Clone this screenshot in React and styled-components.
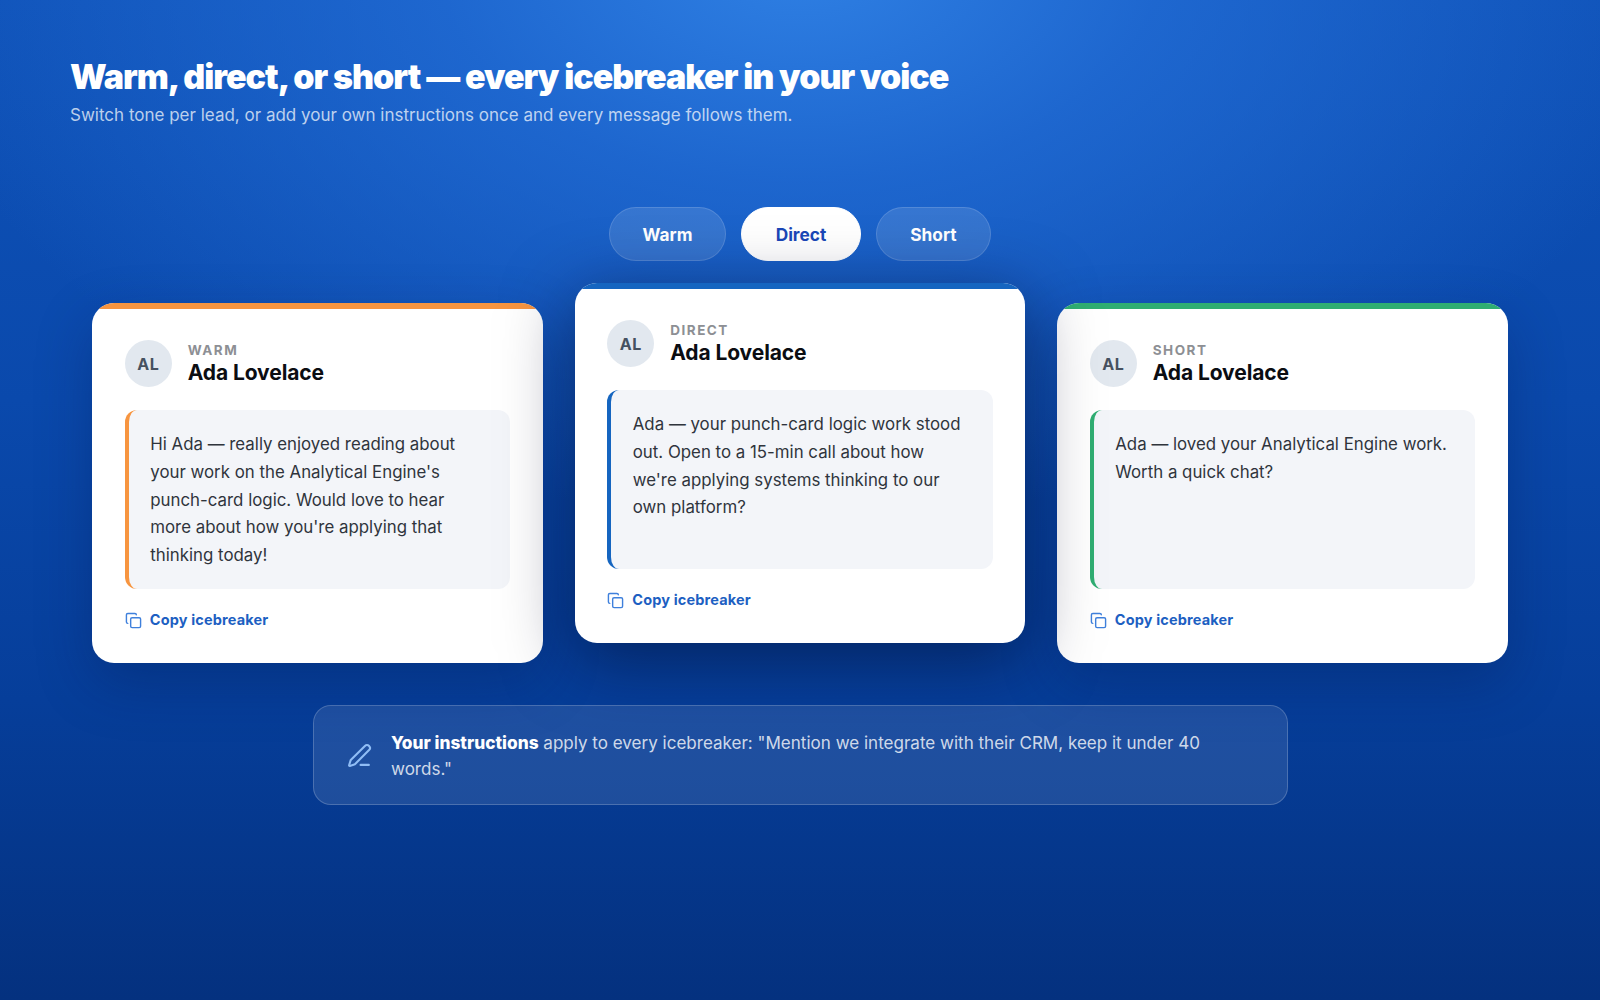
import React from 'react';
import styled, { createGlobalStyle } from 'styled-components';
import { Copy, PenLine } from 'lucide-react';

const GlobalStyle = createGlobalStyle`
    html, body {
        margin: 0;
        height: 100%;
    }
    body {
        font-family: Inter, "Liberation Sans", sans-serif;
        background: #04307e;
    }
`;

const Page = styled.div`
    box-sizing: border-box;
    width: 1600px;
    height: 1000px;
    overflow: hidden;
    padding: 58px 70px 0;
    background:
        radial-gradient(ellipse 900px 560px at 50% -40px, #2f80e4 0%, rgba(35, 110, 215, 0.75) 40%, rgba(13, 80, 185, 0) 100%),
        linear-gradient(180deg, #0f52b8 0%, #0a49ac 40%, #063e9a 70%, #04317f 100%);
`;

const Title = styled.h1`
    margin: 0;
    font-size: 34px;
    line-height: 38px;
    font-weight: 900;
    letter-spacing: -1px;
    color: #fff;
`;

const Subtitle = styled.p`
    margin: 6px 0 0;
    font-size: 17px;
    line-height: 26px;
    color: rgba(255, 255, 255, 0.72);
`;

const Tabs = styled.div`
    display: flex;
    justify-content: center;
    gap: 15px;
    margin-top: 79px;
`;

const Tab = styled.button`
    box-sizing: border-box;
    height: 54px;
    width: ${(p) => p.$width}px;
    padding: 1px 0 0;
    border-radius: 27px;
    border: 1px solid ${(p) => (p.$active ? '#fff' : 'rgba(255, 255, 255, 0.14)')};
    background: ${(p) => (p.$active ? '#fff' : 'rgba(255, 255, 255, 0.12)')};
    color: ${(p) => (p.$active ? '#1a47b8' : '#fff')};
    font-family: inherit;
    font-size: 17.3px;
    font-weight: 700;
`;

const Cards = styled.div`
    display: grid;
    grid-template-columns: repeat(3, 450.5px);
    gap: 32px;
    justify-content: center;
    margin-top: 22px;
`;

const Card = styled.div`
    position: relative;
    z-index: ${(p) => (p.$raised ? 2 : 1)};
    box-sizing: border-box;
    display: flex;
    flex-direction: column;
    height: 360px;
    margin-top: ${(p) => (p.$raised ? '0' : '20px')};
    padding: 37px 32.5px 34px;
    overflow: hidden;
    background: #fff;
    border-radius: 22px;
    box-shadow: ${(p) => (p.$raised ? '0 16px 68px 2px rgba(0, 10, 40, 0.52)' : '0 20px 56px rgba(0, 20, 70, 0.28)')};
`;

const AccentBar = styled.div`
    position: absolute;
    top: 0;
    left: 0;
    right: 0;
    height: 6px;
    background: ${(p) => p.$accent};
`;

const CardHead = styled.div`
    display: flex;
    align-items: center;
    gap: 16px;
`;

const Avatar = styled.div`
    display: flex;
    align-items: center;
    justify-content: center;
    width: 47px;
    height: 47px;
    border-radius: 50%;
    background: #e2e8ef;
    color: #465160;
    font-size: 16px;
    font-weight: 700;
    letter-spacing: 0.5px;
`;

const Tone = styled.div`
    font-size: 13.5px;
    line-height: 16px;
    font-weight: 700;
    letter-spacing: 1.5px;
    color: #8d8f94;
`;

const Name = styled.div`
    margin-top: 1px;
    font-size: 21px;
    line-height: 27px;
    font-weight: 700;
    letter-spacing: -0.1px;
    color: #0b0d12;
`;

const Message = styled.div`
    box-sizing: border-box;
    height: 179px;
    margin-top: 23px;
    padding: 21px 23px 0 21.5px;
    background: #f3f5f9;
    border-left: 4px solid ${(p) => p.$accent};
    border-radius: 12px;
    font-size: 16.85px;
    line-height: 27.8px;
    color: #2f343c;
`;

const CopyRow = styled.div`
    display: flex;
    align-items: center;
    gap: 8px;
    margin-top: 22px;
    font-size: 14.5px;
    line-height: 18px;
    font-weight: 700;
    letter-spacing: 0.15px;
    color: #1d5fc2;
    svg {
        color: #3f80dc;
    }
`;

const Note = styled.div`
    box-sizing: border-box;
    display: flex;
    align-items: center;
    gap: 19px;
    width: 975px;
    height: 100px;
    margin: 42px auto 0;
    padding: 1px 34px 0 33.5px;
    background: rgba(255, 255, 255, 0.1);
    border: 1px solid rgba(255, 255, 255, 0.2);
    border-radius: 18px;
    font-size: 17.05px;
    line-height: 26px;
    color: rgba(255, 255, 255, 0.8);
    b {
        font-size: 17.3px;
        font-weight: 800;
        color: #fff;
    }
    svg {
        flex: none;
        color: #90bdf5;
    }
`;

const NoteText = styled.span`
    padding-top: 1px;
`;

const tabs = [
    { label: 'Warm', width: 117 },
    { label: 'Direct', width: 120, active: true },
    { label: 'Short', width: 115 },
];

const cards = [
    {
        tone: 'WARM',
        accent: '#f79540',
        text: "Hi Ada — really enjoyed reading about your work on the Analytical Engine's punch-card logic. Would love to hear more about how you're applying that thinking today!",
    },
    {
        tone: 'DIRECT',
        accent: '#1565c0',
        raised: true,
        text: "Ada — your punch-card logic work stood out. Open to a 15-min call about how we're applying systems thinking to our own platform?",
    },
    {
        tone: 'SHORT',
        accent: '#2fae72',
        text: 'Ada — loved your Analytical Engine work. Worth a quick chat?',
    },
];

const App = () => {
    return (
        <Page>
            <GlobalStyle />
            <Title>Warm, direct, or short — every icebreaker in your voice</Title>
            <Subtitle>Switch tone per lead, or add your own instructions once and every message follows them.</Subtitle>
            <Tabs>
                {tabs.map((tab) => (
                    <Tab key={tab.label} $width={tab.width} $active={tab.active}>{tab.label}</Tab>
                ))}
            </Tabs>
            <Cards>
                {cards.map((card) => (
                    <Card key={card.tone} $raised={card.raised}>
                        <AccentBar $accent={card.accent} />
                        <CardHead>
                            <Avatar>AL</Avatar>
                            <div>
                                <Tone>{card.tone}</Tone>
                                <Name>Ada Lovelace</Name>
                            </div>
                        </CardHead>
                        <Message $accent={card.accent}>{card.text}</Message>
                        <CopyRow>
                            <Copy size={17} strokeWidth={2} />
                            Copy icebreaker
                        </CopyRow>
                    </Card>
                ))}
            </Cards>
            <Note>
                <PenLine size={25} strokeWidth={2} />
                <NoteText><b>Your instructions</b> apply to every icebreaker: "Mention we integrate with their CRM, keep it under 40 words."</NoteText>
            </Note>
        </Page>
    );
};

export default App;
